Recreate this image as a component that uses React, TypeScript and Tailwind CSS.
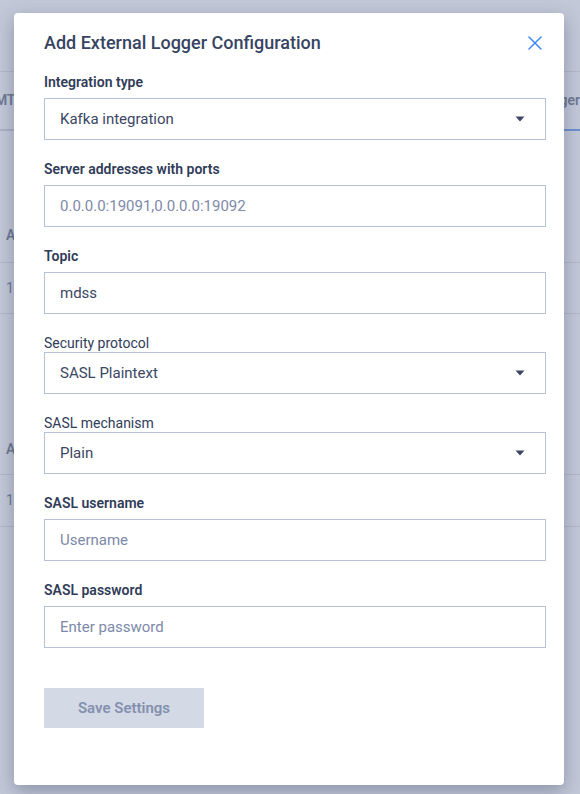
import { X } from 'lucide-react';

const font = { fontFamily: 'Roboto, "Noto Sans", sans-serif' };

function Caret() {
  return (
    <svg width="10" height="6" viewBox="0 0 10 6" className="shrink-0">
      <path d="M0.5 0.5h9L5 5.5z" fill="#3a4663" />
    </svg>
  );
}

function FieldLabel({ children, bold = true }: { children: React.ReactNode; bold?: boolean }) {
  return (
    <div
      className={
        bold
          ? 'text-[14px] leading-[18px] font-semibold text-[#303c58] mb-[7px]'
          : 'text-[14px] leading-[18px] font-normal text-[#303c58]'
      }
    >
      {children}
    </div>
  );
}

function SelectBox({ value }: { value: string }) {
  return (
    <div className="h-[42px] border border-[#b7c1da] flex items-center justify-between pl-[15px] pr-[20px] text-[15px] text-[#3a4663]">
      <span>{value}</span>
      <Caret />
    </div>
  );
}

function TextBox({ value, placeholder }: { value?: string; placeholder?: string }) {
  return (
    <div className="h-[42px] border border-[#b7c1da] flex items-center pl-[15px] text-[15px]">
      {value ? (
        <span className="text-[#3a4663]">{value}</span>
      ) : (
        <span className="text-[#7d89a8]">{placeholder}</span>
      )}
    </div>
  );
}

function BackgroundPage() {
  return (
    <div className="w-full h-full bg-[#c2c8d7] text-[#6e7893] text-[14px] font-semibold">
      <div className="h-[72px] border-b border-[#b1b8c9]" />
      <div className="h-[59px] border-b-2 border-[#aab1c3] flex items-center justify-between">
        <span className="-ml-[5px] tracking-tight">MTI</span>
        <span className="relative">
          Logger
          <span className="absolute left-0 right-0 -bottom-[20px] h-[2px] bg-[#6f8fd0]" />
        </span>
      </div>
      <div className="h-[132px] border-b border-[#b1b8c9] flex items-end pb-[16px] pl-[6px]">A</div>
      <div className="h-[51px] border-b border-[#b1b8c9] flex items-center pl-[6px] font-normal">10</div>
      <div className="h-[161px] border-b border-[#b1b8c9] flex items-end pb-[14px] pl-[6px]">A</div>
      <div className="h-[52px] border-b border-[#b1b8c9] flex items-center pl-[6px] font-normal">12</div>
    </div>
  );
}

export default function App() {
  return (
    <div className="relative w-[580px] h-[794px] overflow-hidden" style={font}>
      <BackgroundPage />
      <div className="absolute left-[14px] top-[13px] w-[550px] h-[772px] bg-white rounded-[4px] shadow-[0_6px_18px_rgba(40,50,80,0.35)] pt-[18px] pl-[30px] pr-[18px]">
        <div className="flex items-center justify-between h-[24px] mb-[18px]">
          <h2 className="text-[18px] leading-[24px] font-medium text-[#374462]">
            Add External Logger Configuration
          </h2>
          <X className="w-[24px] h-[24px] text-[#3d86f5] -mr-[1px]" strokeWidth={1.5} />
        </div>

        <div className="flex flex-col">
          <div className="mb-[20px]">
            <FieldLabel>Integration type</FieldLabel>
            <SelectBox value="Kafka integration" />
          </div>
          <div className="mb-[20px]">
            <FieldLabel>Server addresses with ports</FieldLabel>
            <TextBox placeholder="0.0.0.0:19091,0.0.0.0:19092" />
          </div>
          <div className="mb-[20px]">
            <FieldLabel>Topic</FieldLabel>
            <TextBox value="mdss" />
          </div>
          <div className="mb-[20px]">
            <FieldLabel bold={false}>Security protocol</FieldLabel>
            <SelectBox value="SASL Plaintext" />
          </div>
          <div className="mb-[20px]">
            <FieldLabel bold={false}>SASL mechanism</FieldLabel>
            <SelectBox value="Plain" />
          </div>
          <div className="mb-[20px]">
            <FieldLabel>SASL username</FieldLabel>
            <TextBox placeholder="Username" />
          </div>
          <div className="mb-[40px]">
            <FieldLabel>SASL password</FieldLabel>
            <TextBox placeholder="Enter password" />
          </div>
          <button className="w-[160px] h-[40px] bg-[#d4d9e6] text-[#8390ad] text-[15px] font-semibold">
            Save Settings
          </button>
        </div>
      </div>
    </div>
  );
}
